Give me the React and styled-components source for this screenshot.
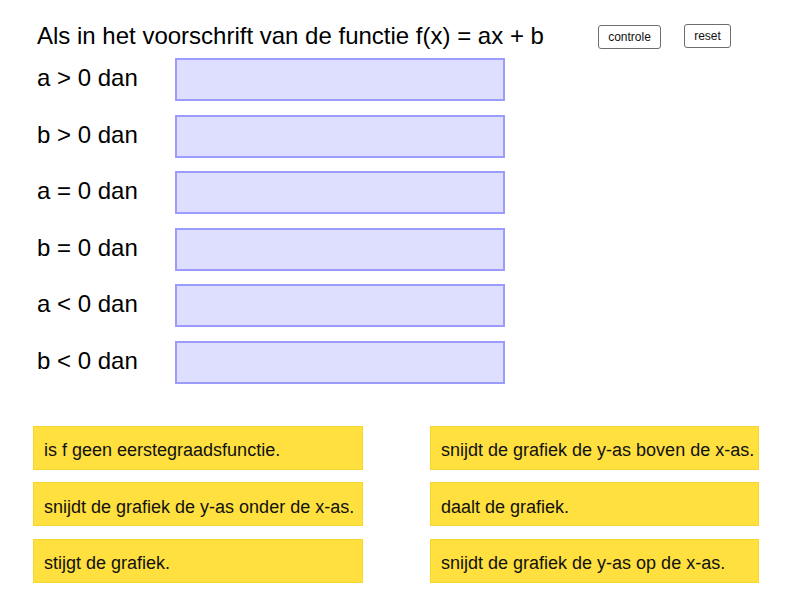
import React from 'react';
import styled, { createGlobalStyle } from 'styled-components';

const GlobalStyle = createGlobalStyle`
  body {
    margin: 0;
    background: #ffffff;
    font-family: "Liberation Sans", Arial, sans-serif;
    color: #000;
  }
`;

const statements = ['a > 0 dan', 'b > 0 dan', 'a = 0 dan', 'b = 0 dan', 'a < 0 dan', 'b < 0 dan'];

const answers = [
  'is f geen eerstegraadsfunctie.',
  'snijdt de grafiek de y-as boven de x-as.',
  'snijdt de grafiek de y-as onder de x-as.',
  'daalt de grafiek.',
  'stijgt de grafiek.',
  'snijdt de grafiek de y-as op de x-as.',
];

function App() {
  return (
    <Page>
      <GlobalStyle />
      <Header>
        <Title>Als in het voorschrift van de functie f(x) = ax + b</Title>
        <Buttons>
          <Button $top={4} $width={63}>controle</Button>
          <Button $top={3} $width={47}>reset</Button>
        </Buttons>
      </Header>
      <Rows>
        {statements.map((s) => (
          <Row key={s}>
            <Label>{s}</Label>
            <DropZone />
          </Row>
        ))}
      </Rows>
      <Cards>
        {answers.map((a) => (
          <Card key={a}>{a}</Card>
        ))}
      </Cards>
    </Page>
  );
}

export default App;

const Page = styled.div`
  width: 788px;
  height: 611px;
  overflow: hidden;
`;

const Header = styled.div`
  display: flex;
  align-items: flex-start;
  height: 28px;
  padding: 22px 0 0 37px;
`;

const Title = styled.div`
  flex: 0 0 561px;
  font-size: 24px;
  line-height: 28px;
  white-space: nowrap;
`;

const Buttons = styled.div`
  display: flex;
  gap: 23px;
  margin-top: -1px;
`;

const Button = styled.button`
  margin-top: ${(p) => p.$top}px;
  width: ${(p) => p.$width}px;
  height: 24px;
  padding: 0;
  background: #fff;
  border: 1.5px solid #6e6e6e;
  border-radius: 3px;
  font-family: "Liberation Sans", Arial, sans-serif;
  font-size: 12px;
  color: #111;
`;

const Rows = styled.div`
  display: flex;
  flex-direction: column;
  gap: 13.6px;
  padding: 8px 0 0 37px;
`;

const Row = styled.div`
  display: flex;
  align-items: center;
`;

const Label = styled.div`
  width: 138px;
  font-size: 24px;
  line-height: 28px;
  margin-top: -3px;
`;

const DropZone = styled.div`
  box-sizing: border-box;
  width: 330px;
  height: 43px;
  background: #dedeff;
  border: 2px solid #9c9cff;
`;

const Cards = styled.div`
  display: grid;
  grid-template-columns: 330px 329px;
  column-gap: 67px;
  row-gap: 12.5px;
  padding: 42px 0 0 33px;
`;

const Card = styled.div`
  box-sizing: border-box;
  height: 44px;
  display: flex;
  align-items: center;
  padding: 6px 0 0 10px;
  background: #ffe03e;
  border: 1px solid #f6d52c;
  font-size: 18px;
  white-space: nowrap;
  color: #111;
`;
